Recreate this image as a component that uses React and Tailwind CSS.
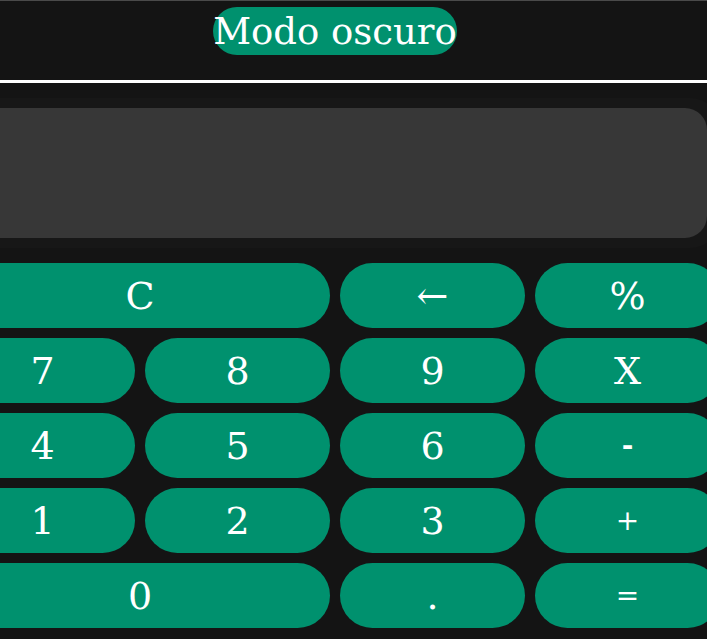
import { useState } from "react";

const teclas = [
    { label: "C", span: true },
    { label: "←" },
    { label: "%" },
    { label: "7" },
    { label: "8" },
    { label: "9" },
    { label: "X" },
    { label: "4" },
    { label: "5" },
    { label: "6" },
    { label: "-", small: true, bold: true },
    { label: "1" },
    { label: "2" },
    { label: "3" },
    { label: "+", small: true },
    { label: "0", span: true },
    { label: "." },
    { label: "=", small: true },
];

function App() {
    const [pantalla, setPantalla] = useState("");

    const pulsar = (valor) => {
        if (valor === "C") return setPantalla("");
        if (valor === "←") return setPantalla(pantalla.slice(0, -1));
        setPantalla(pantalla + valor);
    };

    return (
        <div className="min-h-screen overflow-hidden border-t border-[#4a4a4a] bg-[#141414] font-['DejaVu_Serif',serif] text-white">
            <header className="flex h-[79px] w-[670px] justify-center pt-[6px]">
                <button className="h-[48px] rounded-full bg-[#00916e] text-[37px] leading-none text-white">
                    Modo oscuro
                </button>
            </header>
            <div className="h-[3px] bg-white" />

            <main className="flex w-[670px] justify-center pt-[15px]">
                <div className="w-[770px] shrink-0">
                    <div className="rounded-[30px] bg-[#171717] px-[13px] py-[10px]">
                        <div className="flex h-[130px] items-center justify-end rounded-[22px] bg-[#373737] px-6 text-[38px]">
                            {pantalla}
                        </div>
                    </div>

                    <div className="mt-[15px] grid grid-cols-4 gap-[10px]">
                        {teclas.map((t) => (
                            <button
                                key={t.label}
                                onClick={() => pulsar(t.label)}
                                className={`flex h-[65px] items-center justify-center rounded-full bg-[#00916e] leading-none text-white ${
                                    t.span ? "col-span-2" : ""
                                } ${t.small ? "text-[28px]" : "text-[38px]"} ${t.bold ? "font-bold" : ""}`}
                            >
                                {t.label}
                            </button>
                        ))}
                    </div>
                </div>
            </main>
        </div>
    );
}

export default App;
